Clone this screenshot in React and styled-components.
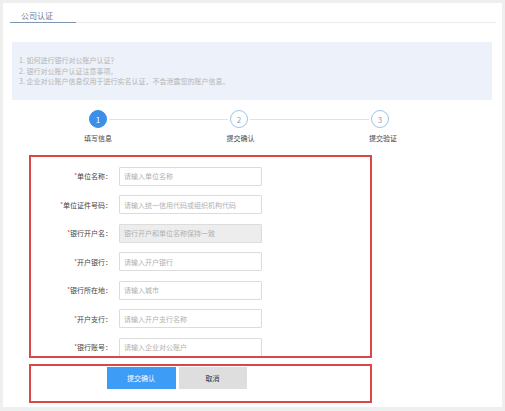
import React from "react";
import styled, { createGlobalStyle } from "styled-components";

const Global = createGlobalStyle`
  html, body { margin: 0; padding: 0; background: #efefef; }
  body { font-family: "Noto Sans CJK SC", "Noto Sans", sans-serif; }
  * { box-sizing: border-box; }
`;

const Panel = styled.div`
  margin: 3px 3px 4px 3px;
  width: 499px;
  height: 404px;
  background: #fff;
  display: flex;
  flex-direction: column;
  overflow: hidden;
`;

const TabBar = styled.div`
  margin: 0 6px 0 7px;
  padding-top: 6px;
  border-bottom: 1px solid #ececec;
  display: flex;
`;

const Tab = styled.div`
  width: 66px;
  padding-left: 11px;
  font-size: 8px;
  line-height: 13px;
  color: #5f7d9b;
  border-bottom: 1px solid #7d97b1;
  margin-bottom: -1px;
`;

const Notice = styled.div`
  margin: 19px 10px 0 9px;
  height: 58px;
  background: #edf2fa;
  padding: 13px 7px 0;
  font-size: 7px;
  line-height: 10.5px;
  color: #b4b4b4;
`;

const Steps = styled.div`
  margin: 10px 0 0 24.5px;
  display: grid;
  grid-template-columns: repeat(3, 141px);
`;

const Step = styled.div`
  position: relative;
  display: flex;
  flex-direction: column;
  align-items: center;
  &::after {
    content: "";
    display: ${(p) => (p.$last ? "none" : "block")};
    position: absolute;
    top: 8.5px;
    left: calc(50% + 11px);
    width: 119px;
    height: 1px;
    background: #e2e2e2;
  }
`;

const Circle = styled.div`
  width: 18px;
  height: 18px;
  border-radius: 50%;
  display: flex;
  align-items: center;
  justify-content: center;
  font-size: 8px;
  background: ${(p) => (p.$active ? "#3b8fe8" : "#fff")};
  color: ${(p) => (p.$active ? "#fff" : "#8aa2bb")};
  border: 1px solid ${(p) => (p.$active ? "#3b8fe8" : "#9fc4e6")};
`;

const StepLabel = styled.div`
  margin-top: 5px;
  margin-left: ${(p) => p.$shift || 0}px;
  font-size: 7px;
  line-height: 10px;
  color: #444;
`;

const FormBox = styled.div`
  margin: 12px 0 0 26px;
  width: 343px;
  height: 203px;
  border: 2px solid #d94848;
  padding-top: 9.5px;
  display: flex;
  flex-direction: column;
  gap: 9.5px;
  overflow: hidden;
`;

const Row = styled.div`
  display: flex;
  align-items: center;
`;

const Label = styled.label`
  width: 81px;
  text-align: right;
  font-size: 7px;
  color: #444;
  margin-right: 7px;
`;

const Star = styled.span`
  color: #e03a3a;
  font-size: 6px;
  vertical-align: 1px;
`;

const Input = styled.input`
  width: 143px;
  height: 19px;
  border: 1px solid #dcdcdc;
  border-radius: 1px;
  padding: 0 4px;
  font-family: inherit;
  font-size: 7px;
  color: #333;
  background: ${(p) => (p.disabled ? "#ededed" : "#fff")};
  outline: none;
  &::placeholder { color: #b0b0b0; }
`;

const ActionBox = styled.div`
  margin: 5.5px 0 0 26px;
  width: 343px;
  height: 39px;
  border: 2px solid #d94848;
  padding: 1.5px 0 0 75.5px;
  display: flex;
  gap: 3px;
  align-items: flex-start;
`;

const Button = styled.button`
  width: ${(p) => p.$w}px;
  height: 21.5px;
  border: none;
  border-radius: 0;
  font-family: inherit;
  font-size: 7px;
  background: ${(p) => (p.$primary ? "#3d9cf6" : "#dedede")};
  color: ${(p) => (p.$primary ? "#fff" : "#333")};
  cursor: pointer;
`;

const fields = [
  { label: "单位名称：", ph: "请输入单位名称" },
  { label: "单位证件号码：", ph: "请输入统一信用代码或组织机构代码" },
  { label: "银行开户名：", ph: "银行开户和单位名称保持一致", disabled: true },
  { label: "开户银行：", ph: "请输入开户银行" },
  { label: "银行所在地：", ph: "请输入城市" },
  { label: "开户支行：", ph: "请输入开户支行名称" },
  { label: "银行账号：", ph: "请输入企业对公账户" },
];

export default function App() {
  return (
    <>
      <Global />
      <Panel>
        <TabBar>
          <Tab>公司认证</Tab>
        </TabBar>
        <Notice>
          <div>1. 如何进行银行对公账户认证？</div>
          <div>2. 银行对公账户认证注意事项。</div>
          <div>3. 企业对公账户信息仅用于进行实名认证，不会泄露您的账户信息。</div>
        </Notice>
        <Steps>
          <Step>
            <Circle $active>1</Circle>
            <StepLabel>填写信息</StepLabel>
          </Step>
          <Step>
            <Circle>2</Circle>
            <StepLabel $shift={3}>提交确认</StepLabel>
          </Step>
          <Step $last>
            <Circle>3</Circle>
            <StepLabel $shift={6}>提交验证</StepLabel>
          </Step>
        </Steps>
        <FormBox>
          {fields.map((f) => (
            <Row key={f.label}>
              <Label>
                <Star>*</Star>
                {f.label}
              </Label>
              <Input placeholder={f.ph} disabled={f.disabled} />
            </Row>
          ))}
        </FormBox>
        <ActionBox>
          <Button $primary $w={69}>提交确认</Button>
          <Button $w={68}>取消</Button>
        </ActionBox>
      </Panel>
    </>
  );
}
